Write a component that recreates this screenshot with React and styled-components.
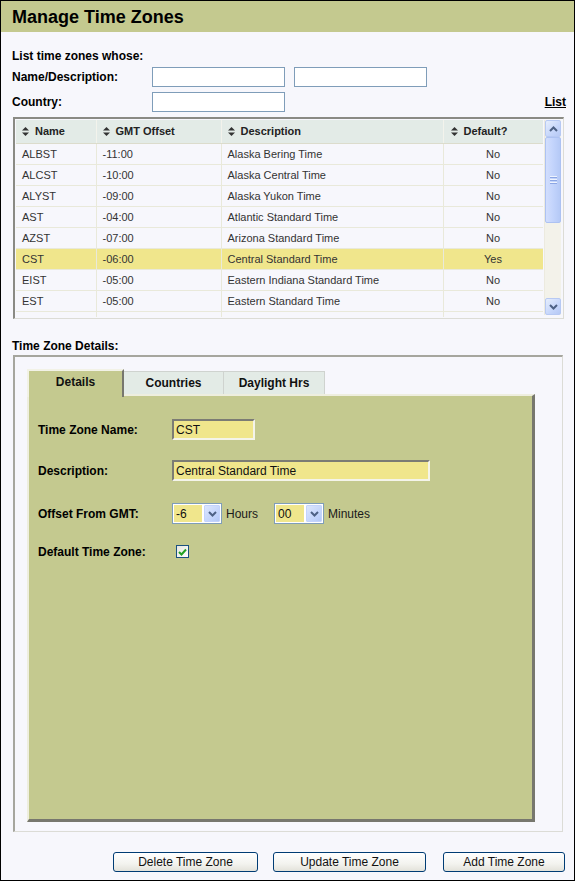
import React from 'react';
import styled, { createGlobalStyle } from 'styled-components';

const Global = createGlobalStyle`
  html, body { margin: 0; padding: 0; background: #f7f7fc; }
  body { font-family: "Liberation Sans", Arial, Helvetica, sans-serif; }
  * { box-sizing: border-box; }
`;

const Page = styled.div`
  width: 575px;
  height: 881px;
  border: 1px solid #000;
  background: #f7f7fc;
  display: flex;
  flex-direction: column;
`;

const Header = styled.div`
  height: 31px;
  background: #c4c98f;
  display: flex;
  align-items: center;
  padding-left: 11px;
`;

const Title = styled.h1`
  margin: 0;
  font-size: 18px;
  font-weight: bold;
  color: #000;
  line-height: 20px;
`;

const Body = styled.div`
  display: flex;
  flex-direction: column;
  padding: 17px 8px 0 11px;
`;

const Label = styled.div`
  font-size: 12px;
  font-weight: bold;
  color: #000;
  line-height: 14px;
`;

const FilterRow = styled.div`
  display: flex;
  align-items: center;
  height: 20px;
  margin-top: ${p => p.$mt || 0}px;
`;

const FilterLabel = styled(Label)`
  width: 140px;
  flex: none;
`;

const TextInput = styled.div`
  width: 133px;
  height: 20px;
  border: 1px solid #7f9db9;
  background: #fff;
  margin-right: 9px;
  flex: none;
`;

const ListLink = styled.a`
  margin-left: auto;
  font-size: 12px;
  font-weight: bold;
  color: #000;
  text-decoration: underline;
  cursor: pointer;
`;

const TableFrame = styled.div`
  margin: 5px 0 0 1px;
  width: 551px;
  height: 202px;
  border-style: solid;
  border-width: 2px 1px 1px 2px;
  border-color: #8a8a84 #dcdcd6 #dcdcd6 #8a8a84;
  padding: 1px;
  display: flex;
  gap: 1px;
  background: #f7f7fc;
`;

const TableClip = styled.div`
  width: 527px;
  height: 100%;
  overflow: hidden;
`;

const Table = styled.table`
  border-collapse: collapse;
  table-layout: fixed;
  width: 527px;
  font-size: 11px;
  color: #333;
`;

const Th = styled.th`
  height: 23px;
  background: #e3ebe7;
  text-align: left;
  font-weight: bold;
  color: #222;
  padding: 0 0 0 ${p => p.$pl || 6}px;
  border-right: 1px solid #f3f3ec;
  border-bottom: 1px solid #dcdccc;
  white-space: nowrap;
`;

const SortIcon = styled.svg`
  width: 7px;
  height: 9px;
  margin-right: 6px;
  vertical-align: -1px;
`;

const Tr = styled.tr`
  background: ${p => (p.$selected ? '#f0e68c' : '#f7f7fc')};
`;

const Td = styled.td`
  height: 21px;
  padding: 0 0 0 6px;
  border-right: 1px solid #e9e9da;
  border-bottom: 1px solid #e9e9da;
  text-align: ${p => (p.$center ? 'center' : 'left')};
  white-space: nowrap;
  overflow: hidden;
  ${p => p.$center && 'padding: 0;'}
`;

const Scrollbar = styled.div`
  width: 17px;
  height: 195px;
  display: flex;
  flex-direction: column;
  background: #f3f2ea;
  border-left: 1px solid #eceadf;
`;

const ScrollBtn = styled.div`
  height: 17px;
  border: 1px solid #b7c9f3;
  border-radius: 2px;
  background: linear-gradient(135deg, #e6eefd 0%, #c6d6fb 60%, #b6c9f5 100%);
  display: flex;
  align-items: center;
  justify-content: center;
  ${p => p.$bottom && 'margin-top: auto;'}
`;

const Thumb = styled.div`
  height: 86px;
  border: 1px solid #adc2f2;
  border-radius: 2px;
  background: linear-gradient(90deg, #d2defd 0%, #c3d4fc 50%, #b5c9f6 100%);
  display: flex;
  flex-direction: column;
  align-items: center;
  justify-content: center;
  gap: 1px;
`;

const Grip = styled.span`
  width: 7px;
  height: 1px;
  background: #eef3fe;
  box-shadow: 0 1px 0 #8ca6e4;
  margin-bottom: 1px;
`;

const SectionLabel = styled(Label)`
  margin-top: 20px;
`;

const DetailsFrame = styled.div`
  margin: 2px 0 0 1px;
  width: 550px;
  height: 477px;
  border-style: solid;
  border-width: 2px 1px 1px 2px;
  border-color: #a6a69e #dcdcd6 #dcdcd6 #a6a69e;
  padding: 12px 0 0 12px;
  display: flex;
  flex-direction: column;
`;

const TabStrip = styled.div`
  display: flex;
  align-items: flex-end;
  height: 25px;
`;

const Tab = styled.div`
  position: relative;
  z-index: ${p => (p.$active ? 2 : 1)};
  width: ${p => p.$w}px;
  height: ${p => (p.$active ? 28 : 23)}px;
  margin-bottom: ${p => (p.$active ? -3 : 0)}px;
  padding-bottom: ${p => (p.$active ? 4 : 1)}px;
  display: flex;
  align-items: center;
  justify-content: center;
  font-size: 12px;
  font-weight: bold;
  color: #111;
  background: ${p => (p.$active ? '#c4c98f' : '#e3ebe6')};
  border-style: solid;
  border-width: ${p => (p.$active ? '2px 2px 0 2px' : '1px 1px 0 0')};
  border-color: ${p => (p.$active ? '#f2f2e6 #77776e #c4c98f #f2f2e6' : '#cfd3cf')};
`;

const Panel = styled.div`
  width: 508px;
  height: 428px;
  background: #c4c98f;
  border-style: solid;
  border-width: 2px 3px 3px 2px;
  border-color: #eeeedf #77776e #77776e #eeeedf;
  padding: 23px 0 0 9px;
  display: flex;
  flex-direction: column;
`;

const FieldRow = styled.div`
  display: flex;
  align-items: center;
  height: 21px;
  margin-top: ${p => p.$mt || 0}px;
`;

const FieldLabel = styled(Label)`
  width: 134px;
  flex: none;
`;

const YellowInput = styled.div`
  width: ${p => p.$w}px;
  height: 21px;
  background: #f0e68c;
  border-style: solid;
  border-width: 2px;
  border-color: #7c7c74 #f4f4ea #f4f4ea #7c7c74;
  font-size: 12px;
  color: #111;
  display: flex;
  align-items: center;
  padding-left: 2px;
`;

const Select = styled.div`
  width: 50px;
  height: 21px;
  border: 1px solid #7f9db9;
  background: #fff;
  display: flex;
  padding: 1px;
  gap: 2px;
`;

const SelectValue = styled.div`
  flex: 1;
  background: #f0e68c;
  font-size: 12px;
  color: #111;
  display: flex;
  align-items: center;
  padding-left: 2px;
`;

const SelectBtn = styled.div`
  width: 16px;
  border: 1px solid #c3d3fd;
  border-radius: 1px;
  background: linear-gradient(135deg, #dce6fe 0%, #c1d3fb 70%, #b4c8f6 100%);
  display: flex;
  align-items: center;
  justify-content: center;
`;

const Unit = styled.span`
  font-size: 12px;
  color: #1a1a1a;
  margin: 0 ${p => p.$mr || 0}px 0 4px;
`;

const Checkbox = styled.div`
  width: 13px;
  height: 13px;
  margin-left: 4px;
  border: 1px solid #1c5180;
  background: linear-gradient(135deg, #e6e6e0 0%, #ffffff 100%);
  display: flex;
  align-items: center;
  justify-content: center;
`;

const ButtonBar = styled.div`
  display: flex;
  justify-content: flex-end;
  margin-top: 20px;
  padding-right: 1px;
`;

const Button = styled.button`
  width: ${p => p.$w}px;
  height: 20px;
  margin-left: ${p => p.$ml || 0}px;
  border: 1px solid #003c74;
  border-radius: 3px;
  background: linear-gradient(180deg, #ffffff 0%, #f3f3ef 60%, #e3e2da 100%);
  font-family: "Liberation Sans", Arial, sans-serif;
  font-size: 12px;
  color: #111;
  padding: 0;
  cursor: pointer;
`;

const Sort = () => (
  <SortIcon viewBox="0 0 7 9">
    <polygon points="3.5,0 7,3.5 0,3.5" fill="#333" />
    <polygon points="0,5.5 7,5.5 3.5,9" fill="#333" />
  </SortIcon>
);

const Chevron = ({ up, color = '#4d6185' }) => (
  <svg width="9" height="6" viewBox="0 0 9 6">
    <polyline
      points={up ? '1,5 4.5,1.5 8,5' : '1,1 4.5,4.5 8,1'}
      fill="none"
      stroke={color}
      strokeWidth="2"
    />
  </svg>
);

const rows = [
  ['ALBST', '-11:00', 'Alaska Bering Time', 'No'],
  ['ALCST', '-10:00', 'Alaska Central Time', 'No'],
  ['ALYST', '-09:00', 'Alaska Yukon Time', 'No'],
  ['AST', '-04:00', 'Atlantic Standard Time', 'No'],
  ['AZST', '-07:00', 'Arizona Standard Time', 'No'],
  ['CST', '-06:00', 'Central Standard Time', 'Yes'],
  ['EIST', '-05:00', 'Eastern Indiana Standard Time', 'No'],
  ['EST', '-05:00', 'Eastern Standard Time', 'No'],
  ['', '', '', ''],
];

export default function App() {
  return (
    <>
      <Global />
      <Page>
        <Header>
          <Title>Manage Time Zones</Title>
        </Header>
        <Body>
          <Label>List time zones whose:</Label>
          <FilterRow $mt={4}>
            <FilterLabel>Name/Description:</FilterLabel>
            <TextInput />
            <TextInput />
          </FilterRow>
          <FilterRow $mt={5}>
            <FilterLabel>Country:</FilterLabel>
            <TextInput />
            <ListLink>List</ListLink>
          </FilterRow>

          <TableFrame>
            <TableClip>
              <Table>
                <colgroup>
                  <col style={{ width: 80 }} />
                  <col style={{ width: 125 }} />
                  <col style={{ width: 222 }} />
                  <col style={{ width: 100 }} />
                </colgroup>
                <thead>
                  <tr>
                    <Th><Sort />Name</Th>
                    <Th><Sort />GMT Offset</Th>
                    <Th><Sort />Description</Th>
                    <Th $pl={7}><Sort />Default?</Th>
                  </tr>
                </thead>
                <tbody>
                  {rows.map((r, i) => (
                    <Tr key={i} $selected={r[3] === 'Yes'}>
                      <Td>{r[0]}</Td>
                      <Td>{r[1]}</Td>
                      <Td>{r[2]}</Td>
                      <Td $center>{r[3]}</Td>
                    </Tr>
                  ))}
                </tbody>
              </Table>
            </TableClip>
            <Scrollbar>
              <ScrollBtn><Chevron up /></ScrollBtn>
              <Thumb>
                <Grip />
                <Grip />
                <Grip />
              </Thumb>
              <ScrollBtn $bottom><Chevron /></ScrollBtn>
            </Scrollbar>
          </TableFrame>

          <SectionLabel>Time Zone Details:</SectionLabel>
          <DetailsFrame>
            <TabStrip>
              <Tab $active $w={97}>Details</Tab>
              <Tab $w={100}>Countries</Tab>
              <Tab $w={101}>Daylight Hrs</Tab>
            </TabStrip>
            <Panel>
              <FieldRow>
                <FieldLabel>Time Zone Name:</FieldLabel>
                <YellowInput $w={83}>CST</YellowInput>
              </FieldRow>
              <FieldRow $mt={20}>
                <FieldLabel>Description:</FieldLabel>
                <YellowInput $w={258}>Central Standard Time</YellowInput>
              </FieldRow>
              <FieldRow $mt={22}>
                <FieldLabel>Offset From GMT:</FieldLabel>
                <Select>
                  <SelectValue>-6</SelectValue>
                  <SelectBtn><Chevron /></SelectBtn>
                </Select>
                <Unit $mr={16}>Hours</Unit>
                <Select>
                  <SelectValue>00</SelectValue>
                  <SelectBtn><Chevron /></SelectBtn>
                </Select>
                <Unit>Minutes</Unit>
              </FieldRow>
              <FieldRow $mt={17}>
                <FieldLabel>Default Time Zone:</FieldLabel>
                <Checkbox>
                  <svg width="9" height="8" viewBox="0 0 9 8">
                    <polyline points="1,4 3.5,6.5 8,1.5" fill="none" stroke="#21a121" strokeWidth="2" />
                  </svg>
                </Checkbox>
              </FieldRow>
            </Panel>
          </DetailsFrame>

          <ButtonBar>
            <Button $w={145}>Delete Time Zone</Button>
            <Button $w={153} $ml={15}>Update Time Zone</Button>
            <Button $w={122} $ml={17}>Add Time Zone</Button>
          </ButtonBar>
        </Body>
      </Page>
    </>
  );
}
